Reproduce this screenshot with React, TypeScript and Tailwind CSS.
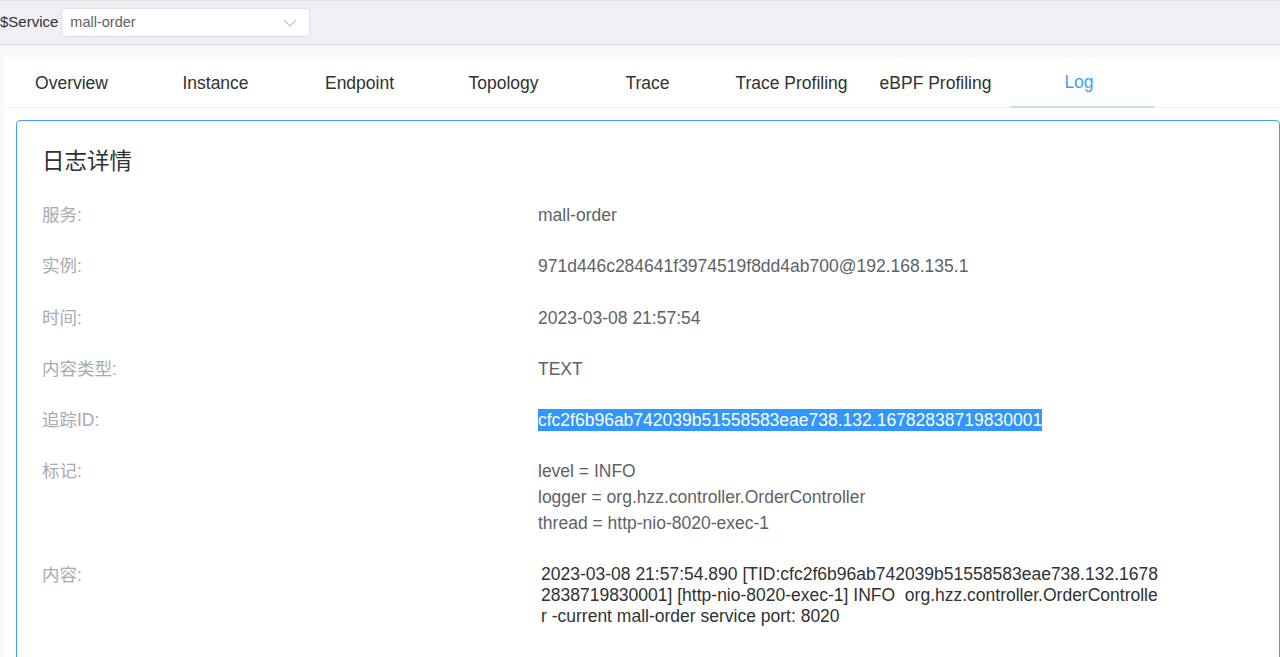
const tabs = [
  "Overview",
  "Instance",
  "Endpoint",
  "Topology",
  "Trace",
  "Trace Profiling",
  "eBPF Profiling",
  "Log",
];

const font = {
  fontFamily: '"Liberation Sans", Arial, "Noto Sans CJK SC", sans-serif',
};

function Row({ label, children }: { label: string; children: React.ReactNode }) {
  return (
    <div className="flex">
      <div className="w-[496px] shrink-0 text-[17.5px] leading-[26px] text-[#a8abb2]">{label}</div>
      <div className="text-[17.5px] leading-[26px] text-[#606266]">{children}</div>
    </div>
  );
}

export default function App() {
  return (
    <div className="h-[657px] w-[1280px] overflow-hidden bg-[#f7f8fa]" style={font}>
      {/* service selector bar */}
      <div className="flex h-[45px] items-center border-t border-b border-[#dcdfe6] bg-[#eff0f4]">
        <span className="text-[15px] text-[#303133]">$Service</span>
        <div className="ml-[3px] flex h-[29px] w-[249px] items-center justify-between rounded-[4px] border border-[#dcdfe6] bg-white pl-[8px] pr-[12px]">
          <span className="text-[14.5px] text-[#606266]">mall-order</span>
          <svg width="14" height="8" viewBox="0 0 14 8" fill="none">
            <path d="M1 1l6 6 6-6" stroke="#c0c4cc" strokeWidth="1.2" />
          </svg>
        </div>
      </div>

      {/* main card */}
      <div className="ml-[4px] mt-[12px] h-[700px] rounded-tl-[4px] bg-white">
        <div className="flex h-[51px] border-b border-[#f0f0f0]">
          <div className="ml-[-2px] flex">
            {tabs.map((t) => (
              <div
                key={t}
                className={
                  t === "Log"
                    ? "flex h-[51px] w-[144px] items-center justify-center border-b-2 border-[#c6ddf5] pr-[6px] pt-[2px] text-[17.5px] text-[#409eff]"
                    : "flex h-[51px] w-[144px] items-center justify-center pr-[5px] pt-[1px] text-[17.5px] text-[#303133]"
                }
              >
                {t}
              </div>
            ))}
          </div>
        </div>

        <div className="ml-[12px] mt-[12px] h-[600px] rounded-[4px] border border-[#409eff] pl-[25px] pt-[26px]">
          <div className="mb-[25px] text-[22.5px] leading-[30px] text-[#303133]">日志详情</div>
          <div className="flex flex-col gap-[25.3px]">
            <Row label="服务:">mall-order</Row>
            <Row label="实例:">971d446c284641f3974519f8dd4ab700@192.168.135.1</Row>
            <Row label="时间:">2023-03-08 21:57:54</Row>
            <Row label="内容类型:">TEXT</Row>
            <Row label="追踪ID:">
              <span className="bg-[#3297fd] py-[1px] text-white">
                cfc2f6b96ab742039b51558583eae738.132.16782838719830001
              </span>
            </Row>
            <Row label="标记:">
              <div>level = INFO</div>
              <div>logger = org.hzz.controller.OrderController</div>
              <div>thread = http-nio-8020-exec-1</div>
            </Row>
            <Row label="内容:">
              <div className="ml-[3px] w-[620px] whitespace-nowrap pt-[2px] text-[17.5px] leading-[21px] text-[#303133]">
                <div>2023-03-08 21:57:54.890 [TID:cfc2f6b96ab742039b51558583eae738.132.1678</div>
                <div>2838719830001] [http-nio-8020-exec-1] INFO&nbsp; org.hzz.controller.OrderControlle</div>
                <div>r -current mall-order service port: 8020</div>
              </div>
            </Row>
          </div>
        </div>
      </div>
    </div>
  );
}
